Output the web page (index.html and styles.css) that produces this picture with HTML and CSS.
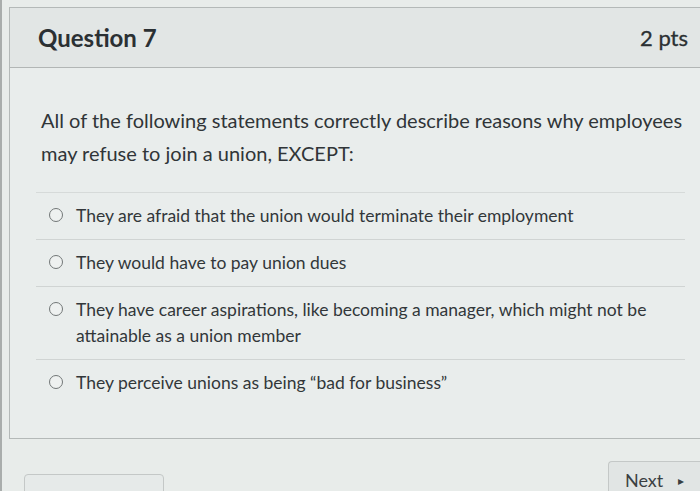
FILE: index.html
```html
<!DOCTYPE html>
<html lang="en">
<head>
<meta charset="utf-8">
<title>Question 7</title>
<link rel="stylesheet" href="styles.css">
</head>
<body>
<div class="page">
  <div class="card">
    <div class="card-header">
      <span class="q-title">Question 7</span>
      <span class="q-pts">2 pts</span>
    </div>
    <div class="card-body">
      <p class="q-text">All of the following statements correctly describe reasons why employees may refuse to join a union, EXCEPT:</p>
      <ul class="answers">
        <li class="answer"><span class="radio"></span><span class="answer-text">They are afraid that the union would terminate their employment</span></li>
        <li class="answer"><span class="radio"></span><span class="answer-text">They would have to pay union dues</span></li>
        <li class="answer"><span class="radio"></span><span class="answer-text">They have career aspirations, like becoming a manager, which might not be attainable as a union member</span></li>
        <li class="answer"><span class="radio"></span><span class="answer-text">They perceive unions as being “bad for business”</span></li>
      </ul>
    </div>
  </div>
  <div class="footer">
    <button class="btn btn-prev" type="button"></button>
    <button class="btn btn-next" type="button">Next <span class="tri">▸</span></button>
  </div>
</div>
</body>
</html>
```

FILE: styles.css
```css
html, body {
  margin: 0;
  padding: 0;
}
body {
  background: #e8ecea;
  font-family: Lato, "Open Sans", "Liberation Sans", sans-serif;
  color: #34393c;
  overflow: hidden;
}
.page {
  height: 491px;
  border-left: 2px solid #a9adac;
  box-sizing: border-box;
  padding-top: 7px;
}
.card {
  margin-left: 7px;
  border: 1px solid #b4b9b8;
  border-right: none;
  background: #e9edec;
}
.card-header {
  height: 60px;
  box-sizing: border-box;
  background: #e2e6e5;
  border-bottom: 1px solid #b2b6b5;
  display: flex;
  align-items: center;
  justify-content: space-between;
  padding: 0 12px 0 28px;
}
.q-title {
  font-size: 24px;
  font-weight: 700;
  color: #2b3033;
}
.q-pts {
  font-size: 22px;
  font-weight: 400;
  color: #2b3033;
  -webkit-text-stroke: 0.3px #2b3033;
}
.card-body {
  padding: 36px 15px 32px 31px;
}
.q-text {
  margin: 0;
  font-size: 20px;
  line-height: 33px;
  color: #303538;
}
.answers {
  list-style: none;
  margin: 22px 0 0 -5px;
  padding: 0;
}
.answer {
  display: flex;
  align-items: flex-start;
  gap: 13px;
  padding: 10px 0 10px 13px;
  border-top: 1px solid #d0d4d3;
  font-size: 17.5px;
  line-height: 26px;
  color: #32373a;
}
.answer:first-child {
  border-top-color: #d6dad9;
}
.radio {
  flex: none;
  width: 12px;
  height: 12px;
  margin-top: 5px;
  border: 1.6px solid #727777;
  border-radius: 50%;
  background: #eef1f0;
}
.answer-text {
  max-width: 580px;
}
.footer {
  display: flex;
  justify-content: space-between;
  align-items: flex-start;
}
.btn {
  font-family: inherit;
  border: 1px solid #c4c8c7;
  border-radius: 4px;
  background: #e1e5e4;
  color: #3a3f42;
}
.btn-prev {
  margin: 35px 0 0 22px;
  width: 140px;
  height: 32px;
  background: #e6eae9;
}
.btn-next {
  margin-top: 22px;
  width: 92px;
  height: 36px;
  font-size: 18px;
  text-align: left;
  padding: 2px 0 0 16px;
  border-right: none;
  border-radius: 4px 0 0 4px;
}
.tri {
  font-size: 12px;
  margin-left: 10px;
  vertical-align: 2px;
}
```
